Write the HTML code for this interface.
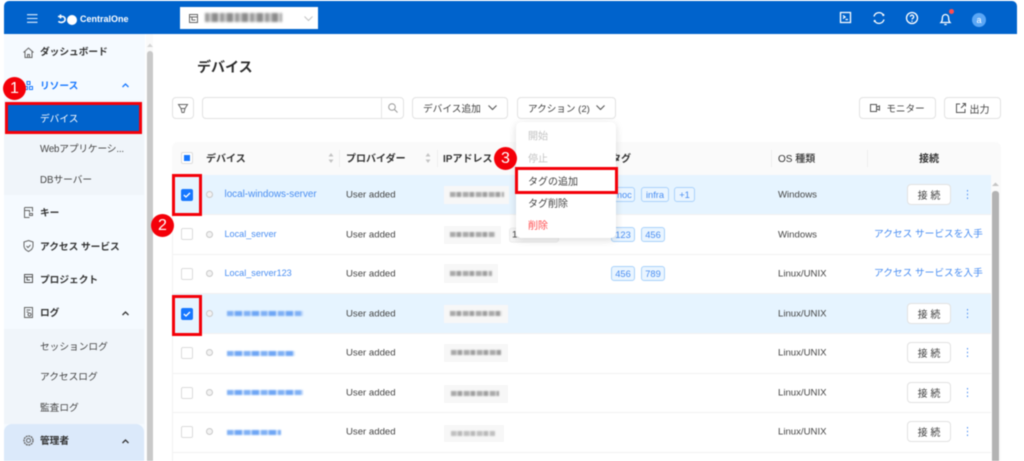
<!DOCTYPE html>
<html lang="ja"><head><meta charset="utf-8"><title>デバイス</title>
<style>
*{box-sizing:border-box}
html,body{margin:0;padding:0;width:1024px;height:461px;overflow:hidden;background:#fff}
#w{position:absolute;left:0;top:0;width:1024px;height:461px;overflow:hidden;font-family:"Liberation Sans","Noto Sans CJK JP",sans-serif;font-size:10px;color:#3a3a3a;filter:blur(.5px)}
.a{position:absolute;white-space:nowrap}
.b{font-weight:700;color:#333}
.side{font-size:9.7px;font-weight:700;color:#333;left:40px}
.sub{font-size:9.7px;color:#444;left:40px}
.btn{position:absolute;background:#fff;border:1px solid #e2e2e2;border-radius:4px;display:flex;align-items:center;justify-content:center;font-size:10px;color:#444;white-space:nowrap}
.blur{position:absolute;filter:blur(1.1px);white-space:nowrap;font-size:8px;line-height:10px}
.ipbox{position:absolute;background:#f7f7f7}
.ipt{position:absolute;height:5px;background:repeating-linear-gradient(90deg,#a9a9a9 0 5px,#cfcfcf 5px 7px,#9d9d9d 7px 11px,#e2e2e2 11px 13px);filter:blur(.8px)}
.lnk{position:absolute;height:5px;background:repeating-linear-gradient(90deg,#7fb0f5 0 6px,#bcd6fa 6px 8px,#6ea6f5 8px 15px,#d5e6fc 15px 17px);filter:blur(.8px)}
.row{position:absolute;left:172px;width:819px;height:40px;border-bottom:1px solid #f2f2f2}
.sel{background:#e6f4ff}
.cb{position:absolute;left:181px;width:12px;height:12px;border:1px solid #dcdcdc;border-radius:2px;background:#fff}
.cbs{position:absolute;left:181px;width:12px;height:12px;border-radius:2px;background:#1677ff}
.dot{position:absolute;left:206px;width:7px;height:7px;border:1px solid #c8c8c8;border-radius:50%;background:#f3f3f3}
.t{font-size:9.6px;color:#444;transform:translateY(.6px)}
.lk{font-size:9.7px;color:#4a8ef2}
.tag{position:absolute;height:15px;border:1px solid #a9d2fb;background:#eaf5ff;border-radius:3px;color:#4a8ef2;font-size:9.3px;display:flex;align-items:center;justify-content:center}
.red{position:absolute;border:3px solid #f40009}
.num{position:absolute;width:23px;height:23px;border-radius:50%;background:#f40009;color:#fff;font-size:16px;display:flex;align-items:center;justify-content:center;line-height:1}
svg{position:absolute;overflow:visible}
.ic{fill:none;stroke:#666;stroke-width:1}
.wi{fill:none;stroke:#fff;stroke-width:1.3}
</style></head><body><div id="w">

<!-- header -->
<div class="a" style="left:4px;top:1px;width:1013px;height:33px;background:#0063cc;border-radius:5px 5px 0 0"></div>
<svg style="left:27px;top:14px" width="11" height="9"><path d="M0 .7h10.500M0 4.500h10.500M0 8.300h10.500" stroke="#dfeeff" stroke-width="1.100"/></svg>
<svg style="left:57px;top:14px" width="21" height="12"><path d="M1 2.500h4.500a2.800 2.800 0 0 1 .5 5.500c-1.500.8-3.500.5-4.500-.8M3.500 .5v4" fill="none" stroke="#fff" stroke-width="1.600"/><circle cx="15" cy="6" r="5" fill="#fff"/></svg>
<div class="a" style="left:80px;top:13px;font-size:9px;font-weight:700;color:#fff;line-height:13px">CentralOne</div>
<div class="a" style="left:180px;top:7px;width:138px;height:22px;background:#fff"></div>
<svg style="left:189px;top:14px" width="9" height="9"><path class="ic" d="M.5.500h8v8h-8zM.5 3h8M3 3v3h3.500" stroke="#555"/></svg>
<div class="blur" style="left:205px;top:13px;width:77px;height:9px;background:repeating-linear-gradient(90deg,#9a9a9a 0 4px,#c9c9c9 4px 7px,#8a8a8a 7px 13px,#e3e3e3 13px 15px)"></div>
<svg style="left:304px;top:16px" width="9" height="6"><path d="M.5.500l4 4 4-4" fill="none" stroke="#c4c4c4"/></svg>
<svg style="left:840px;top:12px" width="11" height="11"><path class="wi" d="M.5.500h10v10H.500zM3 3.500l2 1.500-2 1.500M5.500 7.500h2.500"/></svg>
<svg style="left:873px;top:12px" width="12" height="12"><path class="wi" d="M1 4.500A5.200 5.200 0 0 1 10 2.500M11 7.500A5.200 5.200 0 0 1 2 9.500"/><circle cx="10.300" cy="3" r="1.100" fill="#fff"/><circle cx="1.700" cy="9" r="1.100" fill="#fff"/></svg>
<svg style="left:906px;top:12px" width="12" height="12"><circle class="wi" cx="6" cy="6" r="5.500"/><path class="wi" d="M4.300 4.700a1.700 1.700 0 1 1 2.600 1.500c-.6.400-.9.700-.9 1.300"/><circle cx="6" cy="9.200" r=".7" fill="#fff"/></svg>
<svg style="left:940px;top:12px" width="11" height="13"><path class="wi" d="M1 10.500c1-1 1.300-2 1.300-4 0-2.500 1.300-4 3.200-4s3.200 1.500 3.200 4c0 2 .3 3 1.300 4zM4.300 12.500h2.400"/></svg>
<div class="a" style="left:949px;top:9px;width:5px;height:5px;border-radius:50%;background:#ff4d4f"></div>
<div class="a" style="left:972px;top:13px;width:14px;height:14px;border-radius:50%;background:#5aa6f5;color:#fff;font-size:9px;text-align:center;line-height:14px">a</div>

<!-- sidebar -->
<div class="a" style="left:4px;top:34px;width:141px;height:427px;background:#f5faff"></div>
<div class="a" style="left:4px;top:100px;width:140px;height:95px;background:#f0f5fa"></div>
<div class="a" style="left:4px;top:329px;width:140px;height:95px;background:#f0f5fa"></div>
<div class="a" style="left:4px;top:424px;width:140px;height:37px;background:#dbe9fa;border-radius:8px 8px 0 0"></div>
<div class="a" style="left:146px;top:34px;width:7px;height:427px;background:#fafafa"></div>
<div class="a" style="left:147px;top:51px;width:6px;height:410px;background:#c9c9c9;border-radius:3px 3px 0 0"></div>
<svg style="left:147px;top:43px" width="6" height="4"><path d="M0 4l3-3.500L6 4z" fill="#d5d5d5"/></svg>

<svg style="left:23px;top:47px" width="11" height="11"><path class="ic" d="M.5 5.500L5.500 1l5 4.500M2 4.500v6h7v-6M4.500 10.500v-3h2v3"/></svg>
<div class="a side" style="top:46px;line-height:14px">ダッシュボード</div>
<svg style="left:24px;top:81px" width="9" height="9"><path d="M3 .5h3v3H3zM.5 5.500h3v3h-3zM5.500 5.500h3v3h-3z" fill="none" stroke="#1677ff"/></svg>
<div class="a side" style="top:80px;line-height:14px;color:#1677ff">リソース</div>
<svg style="left:122px;top:83px" width="7" height="5"><path d="M.5 4l3-3 3 3" fill="none" stroke="#1677ff" stroke-width="1.300"/></svg>
<div class="a" style="left:8px;top:104px;width:132px;height:29px;background:#0063cc"></div>
<div class="a sub" style="top:113px;line-height:14px;color:#fff">デバイス</div>
<div class="a sub" style="top:143px;line-height:14px;letter-spacing:-.15px">Webアプリケーシ...</div>
<div class="a sub" style="top:174px;line-height:14px">DBサーバー</div>
<svg style="left:24px;top:207px" width="9" height="11"><path class="ic" d="M.5.500h8v4M.5.500v10h5M.5 3.500h5v2M5.500 6.500h3v2h-3z"/></svg>
<div class="a side" style="top:207px;line-height:14px">キー</div>
<svg style="left:23px;top:240px" width="11" height="12"><path class="ic" d="M5.500.5l4.500 1.500v4c0 3-2.500 4.500-4.500 5.500C3.500 10.500 1 9 1 6V2zM3.500 6l1.500 1.500 2.500-2.500"/></svg>
<div class="a side" style="top:241px;line-height:14px">アクセス サービス</div>
<svg style="left:24px;top:274px" width="9" height="9"><path d="M.5.500h8v8h-8zM.5 3h8M3 3v3h3" fill="none" stroke="#555"/></svg>
<div class="a side" style="top:274px;line-height:14px">プロジェクト</div>
<svg style="left:24px;top:307px" width="9" height="11"><path class="ic" d="M.5.500h8v10h-8zM2.500 3h4M2.500 5h2"/><circle class="ic" cx="5.500" cy="7.500" r="1.500"/></svg>
<div class="a side" style="top:307px;line-height:14px">ログ</div>
<svg style="left:122px;top:311px" width="7" height="5"><path d="M.5 4l3-3 3 3" fill="none" stroke="#333" stroke-width="1.300"/></svg>
<div class="a sub" style="top:341px;line-height:14px">セッションログ</div>
<div class="a sub" style="top:371px;line-height:14px">アクセスログ</div>
<div class="a sub" style="top:402px;line-height:14px">監査ログ</div>
<svg style="left:23px;top:435px" width="11" height="11"><circle class="ic" cx="5.500" cy="5.500" r="2"/><circle cx="5.500" cy="5.500" r="4.500" fill="none" stroke="#666" stroke-width="1.300" stroke-dasharray="2 .6"/></svg>
<div class="a side" style="top:435px;line-height:14px">管理者</div>
<svg style="left:122px;top:439px" width="7" height="5"><path d="M.5 4l3-3 3 3" fill="none" stroke="#333" stroke-width="1.300"/></svg>

<!-- title -->
<div class="a" style="left:197px;top:57px;font-size:14px;font-weight:700;color:#2b2b2b;line-height:20px">デバイス</div>

<!-- toolbar -->
<div class="btn" style="left:172px;top:97px;width:22px;height:22px"></div>
<svg style="left:178px;top:104px" width="10" height="9"><path class="ic" d="M.5.500h9L7 4.500H3zM3 4.500L4 8.500h2L7 4.500" stroke="#555"/></svg>
<div class="btn" style="left:202px;top:97px;width:202px;height:22px"></div>
<div class="a" style="left:381px;top:98px;width:1px;height:20px;background:#e6e6e6"></div>
<svg style="left:388px;top:103px" width="10" height="10"><circle cx="4" cy="4" r="3.300" fill="none" stroke="#999"/><path d="M6.500 6.500l3 3" stroke="#999"/></svg>
<div class="btn" style="left:412px;top:97px;width:96px;height:22px;justify-content:flex-start;padding-left:10px;font-size:9.7px">デバイス追加</div>
<svg style="left:488px;top:105px" width="9" height="6"><path d="M.5.500l4 4 4-4" fill="none" stroke="#555" stroke-width="1.100"/></svg>
<div class="btn" style="left:517px;top:97px;width:99px;height:22px;justify-content:flex-start;padding-left:10px;font-size:9.6px">アクション (2)</div>
<svg style="left:596px;top:105px" width="9" height="6"><path d="M.5.500l4 4 4-4" fill="none" stroke="#555" stroke-width="1.100"/></svg>
<div class="btn" style="left:859px;top:97px;width:77px;height:22px;padding-left:16px;font-size:9.6px">モニター</div>
<svg style="left:870px;top:104px" width="10" height="8"><path d="M.5.500h6v7h-6zM6.500 3l3-1v4l-3-1" fill="none" stroke="#555"/></svg>
<div class="btn" style="left:944px;top:97px;width:57px;height:22px;padding-left:14px">出力</div>
<svg style="left:956px;top:103px" width="10" height="10"><path d="M4 1H.5v8.500H9V6M5 5l4.500-4.500M6.500.5h3v3" fill="none" stroke="#555"/></svg>

<!-- table head -->
<div class="a" style="left:172px;top:142px;width:829px;height:33px;background:#fafafa;border-radius:6px 6px 0 0"></div>
<div class="a" style="left:181px;top:152px;width:12px;height:12px;background:#fff;border:1px solid #dcdcdc;border-radius:2px"></div>
<div class="a" style="left:184px;top:155px;width:6px;height:6px;background:#1677ff"></div>
<div class="a b" style="left:206px;top:153px;line-height:14px">デバイス</div>
<div class="a b" style="left:346px;top:153px;line-height:14px">プロバイダー</div>
<div class="a b" style="left:443px;top:153px;line-height:14px">IPアドレス</div>
<div class="a b" style="left:611px;top:153px;line-height:14px">タグ</div>
<div class="a b" style="left:778px;top:153px;line-height:14px;font-weight:500;color:#333">OS 種類</div>
<div class="a b" style="left:919px;top:153px;line-height:14px">接続</div>
<svg style="left:328px;top:153px" width="6" height="10"><path d="M3 0l2.500 3.500h-5zM3 10L.5 6.500h5z" fill="#c4c4c4"/></svg>
<svg style="left:425px;top:153px" width="6" height="10"><path d="M3 0l2.500 3.500h-5zM3 10L.5 6.500h5z" fill="#c4c4c4"/></svg>
<div class="a" style="left:437px;top:150px;width:1px;height:17px;background:#eee"></div>
<div class="a" style="left:339px;top:150px;width:1px;height:17px;background:#eee"></div>
<div class="a" style="left:771px;top:150px;width:1px;height:17px;background:#eee"></div>
<div class="a" style="left:867px;top:150px;width:1px;height:17px;background:#eee"></div>
<div class="a" style="left:172px;top:175px;width:1px;height:286px;background:#f2f2f2"></div>

<!-- rows -->
<div class="row sel" style="top:175px"></div>
<div class="row" style="top:215px"></div>
<div class="row" style="top:254px"></div>
<div class="row sel" style="top:294px"></div>
<div class="row" style="top:334px"></div>
<div class="row" style="top:373px"></div>
<div class="row" style="top:413px"></div>

<div class="cbs" style="top:189px"></div>
<svg style="left:183px;top:192px" width="8" height="6"><path d="M.8 3l2.200 2L7 1" fill="none" stroke="#fff" stroke-width="1.300"/></svg>
<div class="cb" style="top:228px"></div>
<div class="cb" style="top:268px"></div>
<div class="cbs" style="top:308px"></div>
<svg style="left:183px;top:311px" width="8" height="6"><path d="M.8 3l2.200 2L7 1" fill="none" stroke="#fff" stroke-width="1.300"/></svg>
<div class="cb" style="top:347px"></div>
<div class="cb" style="top:387px"></div>
<div class="cb" style="top:426px"></div>

<div class="dot" style="top:191px"></div>
<div class="dot" style="top:231px"></div>
<div class="dot" style="top:270px"></div>
<div class="dot" style="top:310px"></div>
<div class="dot" style="top:349px"></div>
<div class="dot" style="top:389px"></div>
<div class="dot" style="top:428px"></div>

<div class="a lk" style="left:224.500px;top:188px;line-height:13px;font-size:9.900px">local-windows-server</div>
<div class="a lk" style="left:224.500px;top:228px;line-height:13px;font-size:9.100px">Local_server</div>
<div class="a lk" style="left:224.500px;top:267px;line-height:13px;font-size:9.100px">Local_server123</div>
<div class="lnk" style="left:227px;top:311px;width:76px"></div>
<div class="lnk" style="left:227px;top:351px;width:68px"></div>
<div class="lnk" style="left:227px;top:390px;width:76px"></div>
<div class="lnk" style="left:227px;top:430px;width:54px"></div>

<div class="a t" style="left:346px;top:188px;line-height:13px">User added</div>
<div class="a t" style="left:346px;top:228px;line-height:13px">User added</div>
<div class="a t" style="left:346px;top:267px;line-height:13px">User added</div>
<div class="a t" style="left:346px;top:307px;line-height:13px">User added</div>
<div class="a t" style="left:346px;top:346px;line-height:13px">User added</div>
<div class="a t" style="left:346px;top:386px;line-height:13px">User added</div>
<div class="a t" style="left:346px;top:425px;line-height:13px">User added</div>

<div class="ipbox" style="left:444px;top:186px;width:65px;height:18px"></div><div class="ipt" style="left:450px;top:192px;width:54px"></div>
<div class="ipbox" style="left:444px;top:226px;width:57px;height:18px"></div><div class="ipt" style="left:450px;top:232px;width:45px"></div>
<div class="a t" style="left:509px;top:227px;width:50px;height:15px;background:#f6f6f6;border:1px solid #ececec;border-radius:3px;padding-left:2px;line-height:13px">1.</div>
<div class="ipbox" style="left:444px;top:264px;width:54px;height:19px"></div><div class="ipt" style="left:450px;top:271px;width:42px"></div>
<div class="ipbox" style="left:444px;top:305px;width:64px;height:18px"></div><div class="ipt" style="left:450px;top:311px;width:52px"></div>
<div class="ipbox" style="left:444px;top:344px;width:64px;height:18px"></div><div class="ipt" style="left:451px;top:350px;width:50px"></div>
<div class="ipbox" style="left:444px;top:385px;width:64px;height:18px"></div><div class="ipt" style="left:451px;top:391px;width:48px"></div>
<div class="ipbox" style="left:444px;top:425px;width:60px;height:17px"></div><div class="ipt" style="left:451px;top:431px;width:44px;opacity:.7"></div>

<div class="tag" style="left:611px;top:187px;width:24px">moc</div>
<div class="tag" style="left:641px;top:187px;width:28px">infra</div>
<div class="tag" style="left:674px;top:187px;width:21px">+1</div>
<div class="tag" style="left:611px;top:227px;width:24px">123</div>
<div class="tag" style="left:641px;top:227px;width:24px">456</div>
<div class="tag" style="left:611px;top:266px;width:24px">456</div>
<div class="tag" style="left:641px;top:266px;width:24px">789</div>

<div class="a t" style="left:778px;top:188px;line-height:13px">Windows</div>
<div class="a t" style="left:778px;top:228px;line-height:13px">Windows</div>
<div class="a t" style="left:778px;top:267px;line-height:13px">Linux/UNIX</div>
<div class="a t" style="left:778px;top:307px;line-height:13px">Linux/UNIX</div>
<div class="a t" style="left:778px;top:346px;line-height:13px">Linux/UNIX</div>
<div class="a t" style="left:778px;top:386px;line-height:13px">Linux/UNIX</div>
<div class="a t" style="left:778px;top:425px;line-height:13px">Linux/UNIX</div>

<div class="a lk" style="left:874px;top:228px;line-height:14px;font-size:9.700px">アクセス サービスを入手</div>
<div class="a lk" style="left:874px;top:267px;line-height:14px;font-size:9.700px">アクセス サービスを入手</div>

<div class="btn" style="left:907px;top:184px;width:44px;height:21px">接 続</div>
<div class="btn" style="left:907px;top:303px;width:44px;height:21px">接 続</div>
<div class="btn" style="left:907px;top:342px;width:44px;height:21px">接 続</div>
<div class="btn" style="left:907px;top:382px;width:44px;height:21px">接 続</div>
<div class="btn" style="left:907px;top:421px;width:44px;height:21px">接 続</div>
<svg style="left:966px;top:190px" width="3" height="9"><path d="M1.500 0v1.500M1.500 3.700v1.500M1.500 7.500v1.500" stroke="#4a8ef2"/></svg>
<svg style="left:966px;top:309px" width="3" height="9"><path d="M1.500 0v1.500M1.500 3.700v1.500M1.500 7.500v1.500" stroke="#4a8ef2"/></svg>
<svg style="left:966px;top:348px" width="3" height="9"><path d="M1.500 0v1.500M1.500 3.700v1.500M1.500 7.500v1.500" stroke="#4a8ef2"/></svg>
<svg style="left:966px;top:388px" width="3" height="9"><path d="M1.500 0v1.500M1.500 3.700v1.500M1.500 7.500v1.500" stroke="#4a8ef2"/></svg>
<svg style="left:966px;top:427px" width="3" height="9"><path d="M1.500 0v1.500M1.500 3.700v1.500M1.500 7.500v1.500" stroke="#4a8ef2"/></svg>

<!-- table scrollbar -->
<div class="a" style="left:991px;top:175px;width:10px;height:286px;background:#fafafa"></div>
<div class="a" style="left:992px;top:191px;width:7px;height:270px;background:#b3b3b3;border-radius:3px 3px 0 0"></div>
<svg style="left:992px;top:182px" width="7" height="4"><path d="M0 4l3.500-3.500L7 4z" fill="#c4c4c4"/></svg>

<!-- dropdown -->
<div class="a" style="left:516px;top:122px;width:100px;height:116px;background:#fff;border-radius:5px;box-shadow:0 2px 8px rgba(0,0,0,.14)"></div>
<div class="a" style="left:528px;top:129px;line-height:14px;color:#c4c4c4;transform:translateY(1.500px)">開始</div>
<div class="a" style="left:528px;top:151px;line-height:14px;color:#c4c4c4;transform:translateY(2px)">停止</div>
<div class="a" style="left:528px;top:176px;line-height:14px;color:#444">タグの追加</div>
<div class="a" style="left:528px;top:198px;line-height:14px;color:#444">タグ削除</div>
<div class="a" style="left:528px;top:220px;line-height:14px;color:#ff4d4f">削除</div>

<!-- annotations -->
<div class="red" style="left:5px;top:102px;width:137px;height:32px"></div>
<div class="red" style="left:172px;top:174px;width:30px;height:42px"></div>
<div class="red" style="left:172px;top:295px;width:30px;height:41px"></div>
<div class="red" style="left:515px;top:167px;width:103px;height:27px"></div>
<div class="num" style="left:3px;top:77px">1</div>
<div class="num" style="left:151px;top:214px">2</div>
<div class="num" style="left:494px;top:147px">3</div>
</div></body></html>
